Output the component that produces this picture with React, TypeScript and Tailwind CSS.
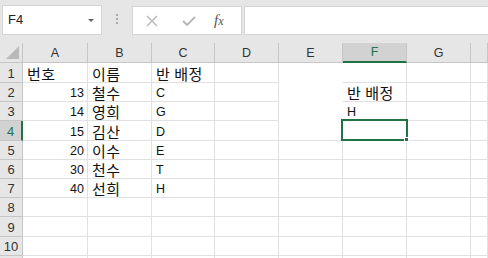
import React from "react";

const cols = ["A", "B", "C", "D", "E", "F", "G", ""];
const rowHeights = ["h-[20px]", "h-[19px]", "h-[19px]", "h-[20px]", "h-[19px]", "h-[19px]", "h-[19px]", "h-[19px]", "h-[20px]", "h-[19px]", "h-[19px]"];

const data: string[][] = [
  ["번호", "이름", "반 배정", "", "", "", "", ""],
  ["13", "철수", "C", "", "", "반 배정", "", ""],
  ["14", "영희", "G", "", "", "H", "", ""],
  ["15", "김산", "D", "", "", "", "", ""],
  ["20", "이수", "E", "", "", "", "", ""],
  ["30", "천수", "T", "", "", "", "", ""],
  ["40", "선희", "H", "", "", "", "", ""],
  [], [], [], [],
];

const isKo = (s: string) => /[\uac00-\ud7a3]/.test(s);
const isNum = (s: string) => /^\d+$/.test(s);

function Cell({ value, r, c }: { value: string; r: number; c: number }) {
  // E1:E3 look filled white, so their gridlines are gone
  const hidden = c === 4 && r < 3;
  const border = hidden ? "border-b border-b-white" : "border-b border-r border-[#e1e1e1]";
  const align = isNum(value) ? "justify-end pr-[3px]" : "justify-start pl-[4px]";
  const font = isKo(value)
    ? "text-[15px] tracking-[0.5px] font-['Noto_Sans_CJK_KR',sans-serif] text-[#111] pt-[1px]"
    : "text-[12.5px] font-['Liberation_Sans',Arial,sans-serif] text-[#111] pt-[3px]";
  return (
    <div className={`flex items-center overflow-visible whitespace-nowrap leading-none ${border} ${align} ${font}`}>
      {value}
    </div>
  );
}

export default function App() {
  return (
    <div className="relative w-[488px] h-[258px] overflow-hidden bg-white font-['Liberation_Sans',Arial,sans-serif]">
      {/* formula bar */}
      <div className="flex h-[43px] items-start bg-[#e6e6e6] pt-[5px]">
        <div className="ml-[2px] flex h-[30px] w-[100px] items-center justify-between border border-[#d4d4d4] bg-white pl-[5px] pr-[7px]">
          <span className="text-[13px] text-[#222]">F4</span>
          <span className="h-0 w-0 border-x-[3px] border-t-[3px] border-x-transparent border-t-[#666]" />
        </div>
        <div className="flex w-[30px] flex-col items-center gap-[2px] pt-[9px]">
          <span className="h-[2px] w-[2px] bg-[#aaa]" />
          <span className="h-[2px] w-[2px] bg-[#aaa]" />
          <span className="h-[2px] w-[2px] bg-[#aaa]" />
        </div>
        <div className="mt-[1px] flex h-[29px] w-[110px] items-center border border-[#d4d4d4] bg-white">
          <svg width="14" height="14" viewBox="0 0 14 14" className="ml-[12px]">
            <path d="M2 2 L12 12 M12 2 L2 12" stroke="#b5b5b5" strokeWidth="1.3" fill="none" />
          </svg>
          <svg width="16" height="14" viewBox="0 0 16 14" className="ml-[22px]">
            <path d="M2 7 L6 11 L14 3" stroke="#b5b5b5" strokeWidth="1.8" fill="none" />
          </svg>
          <span className="ml-[17px] font-['Liberation_Serif',serif] text-[15px] italic text-[#555]">
            f<span className="text-[12px]">x</span>
          </span>
        </div>
        <div className="ml-[2px] mt-[1px] h-[29px] flex-1 border border-r-0 border-[#d4d4d4] bg-white" />
      </div>

      {/* sheet */}
      <div className="grid grid-cols-[23px_65px_64px_63px_64px_64px_64px_64px_1fr]">
        {/* header row */}
        <div className="relative h-[20px] border-b border-r border-[#c6c6c6] bg-[#e6e6e6]">
          <span className="absolute bottom-[3px] right-[3px] h-0 w-0 border-b-[13px] border-l-[13px] border-l-transparent border-b-[#b9b9b9]" />
        </div>
        {cols.map((c, i) => (
          <div
            key={i}
            className={
              c === "F"
                ? "flex h-[20px] items-center justify-center border-b-2 border-r border-b-[#217346] border-r-[#c6c6c6] bg-[#d2d2d2] pt-[1px] text-[12.5px] text-[#217346]"
                : "flex h-[20px] items-center justify-center border-b border-r border-[#c6c6c6] bg-[#e6e6e6] pt-[1px] text-[12.5px] text-[#333]"
            }
          >
            {c}
          </div>
        ))}

        {data.map((row, r) => (
          <React.Fragment key={r}>
            <div
              className={
                r === 3
                  ? `flex ${rowHeights[r]} items-center justify-center border-b border-r-2 border-b-[#c6c6c6] border-r-[#217346] bg-[#d2d2d2] pt-[2px] text-[13px] text-[#217346]`
                  : `flex ${rowHeights[r]} items-center justify-center border-b border-r border-[#c6c6c6] bg-[#e6e6e6] pt-[2px] text-[13px] text-[#333]`
              }
            >
              {r < 10 ? r + 1 : ""}
            </div>
            {cols.map((_, c) => (
              <Cell key={c} value={row[c] ?? ""} r={r} c={c} />
            ))}
          </React.Fragment>
        ))}
      </div>

      {/* active cell F4 */}
      <div className="absolute left-[341px] top-[119px] h-[22px] w-[67px] border-2 border-[#217346]">
        <span className="absolute -bottom-[3px] -right-[3px] h-[5px] w-[5px] border border-white bg-[#217346]" />
      </div>
    </div>
  );
}
